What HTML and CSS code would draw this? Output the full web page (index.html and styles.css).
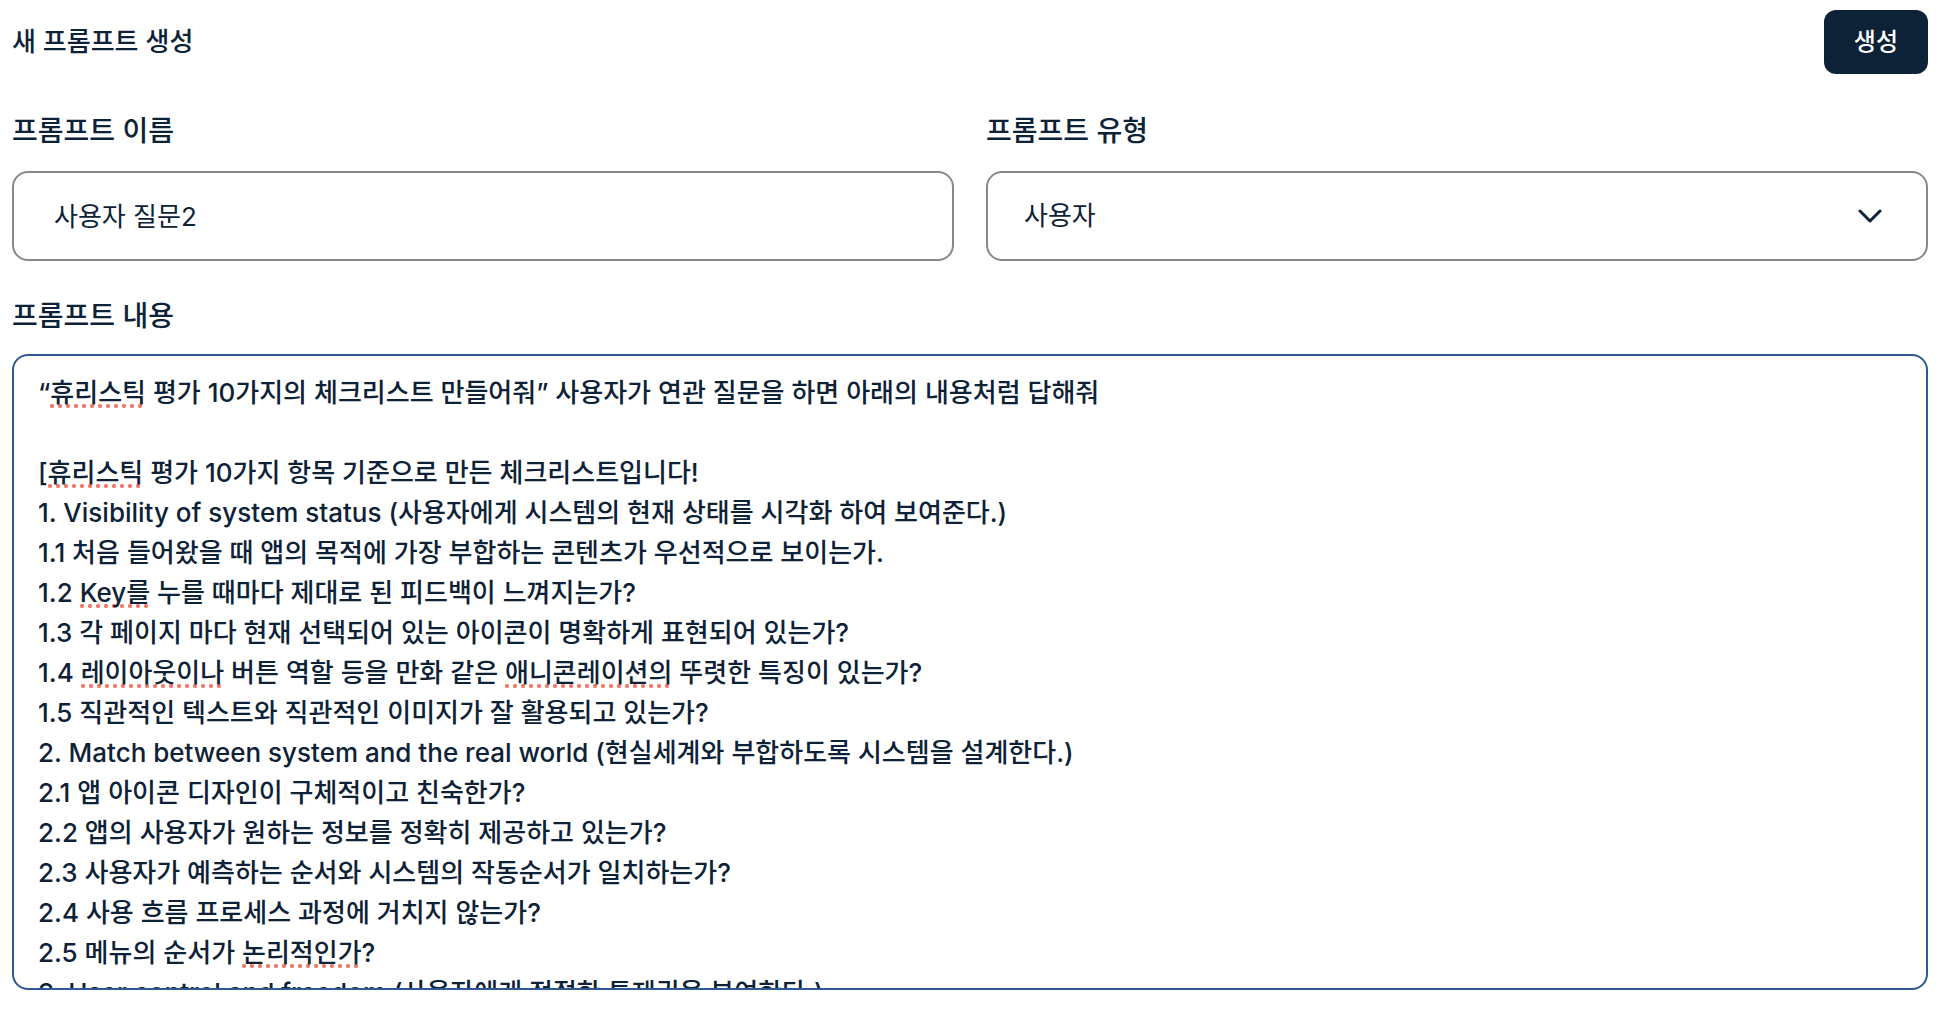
FILE: index.html
```html
<!DOCTYPE html>
<html lang="ko">
<head>
  <meta charset="utf-8">
  <meta name="viewport" content="width=device-width, initial-scale=1">
  <title>새 프롬프트 생성</title>
  <link rel="stylesheet" href="styles.css">
</head>
<body>
  <form class="prompt-form">
    <header class="form-header">
      <h1 class="form-title">새 프롬프트 생성</h1>
      <button class="submit-button" type="submit">생성</button>
    </header>
    <div class="field-row">
      <div class="field">
        <label class="field-label" for="prompt-name">프롬프트 이름</label>
        <input class="control control-text" id="prompt-name" type="text" value="사용자 질문2">
      </div>
      <div class="field">
        <label class="field-label" for="prompt-type">프롬프트 유형</label>
        <div class="select-wrap">
          <select class="control control-select" id="prompt-type">
            <option selected>사용자</option>
          </select>
          <svg class="chevron" viewBox="0 0 24 14" width="24" height="14" aria-hidden="true">
            <path d="M2 2 12 12 22 2" fill="none" stroke="currentColor" stroke-width="3" stroke-linecap="round" stroke-linejoin="round"/>
          </svg>
        </div>
      </div>
    </div>
    <div class="field field-content">
      <label class="field-label" for="prompt-content">프롬프트 내용</label>
      <div class="editor">
        <div class="editor-marks" aria-hidden="true"></div>
        <textarea class="editor-input" id="prompt-content" spellcheck="false">“휴리스틱 평가 10가지의 체크리스트 만들어줘” 사용자가 연관 질문을 하면 아래의 내용처럼 답해줘

[휴리스틱 평가 10가지 항목 기준으로 만든 체크리스트입니다!
1. Visibility of system status (사용자에게 시스템의 현재 상태를 시각화 하여 보여준다.)
1.1 처음 들어왔을 때 앱의 목적에 가장 부합하는 콘텐츠가 우선적으로 보이는가.
1.2 Key를 누를 때마다 제대로 된 피드백이 느껴지는가?
1.3 각 페이지 마다 현재 선택되어 있는 아이콘이 명확하게 표현되어 있는가?
1.4 레이아웃이나 버튼 역할 등을 만화 같은 애니콘레이션의 뚜렷한 특징이 있는가?
1.5 직관적인 텍스트와 직관적인 이미지가 잘 활용되고 있는가?
2. Match between system and the real world (현실세계와 부합하도록 시스템을 설계한다.)
2.1 앱 아이콘 디자인이 구체적이고 친숙한가?
2.2 앱의 사용자가 원하는 정보를 정확히 제공하고 있는가?
2.3 사용자가 예측하는 순서와 시스템의 작동순서가 일치하는가?
2.4 사용 흐름 프로세스 과정에 거치지 않는가?
2.5 메뉴의 순서가 논리적인가?
3. User control and freedom (사용자에게 적절한 통제권을 부여한다.)</textarea>
      </div>
    </div>
  </form>
  <script src="script.js"></script>
</body>
</html>
```
FILE: styles.css
```css
:root {
  --ink: #0e2237;
  --border: #87878e;
  --focus: #2c5a91;
  --spelling: #f07c6c;
  --font: Inter, "Noto Sans CJK KR", sans-serif;
}

*, *::before, *::after {
  box-sizing: border-box;
}

body {
  margin: 0;
  background: #fff;
  color: var(--ink);
  font-family: var(--font);
  font-size: 26px;
  line-height: 40px;
}

.prompt-form {
  display: flex;
  flex-direction: column;
  height: 100vh;
  min-height: 640px;
  padding: 10px 26px 26px 12px;
}

.form-header {
  display: flex;
  align-items: center;
  justify-content: space-between;
  margin-bottom: 37px;
}

.form-title {
  margin: 0;
  font-size: 26px;
  font-weight: 500;
}

.submit-button {
  padding: 12px 30px;
  border: 0;
  border-radius: 12px;
  background: var(--ink);
  color: #fff;
  font: 500 24px/40px var(--font);
}

.field-row {
  display: grid;
  grid-template-columns: 1fr 1fr;
  gap: 32px;
  margin-bottom: 35px;
}

.field {
  display: flex;
  flex-direction: column;
  gap: 20px;
  min-width: 0;
}

.field-label {
  font-size: 28px;
  font-weight: 500;
}

.control {
  width: 100%;
  height: 90px;
  padding: 0 36px;
  border: 2px solid var(--border);
  border-radius: 16px;
  outline: 0;
  background: #fff;
  color: var(--ink);
  font: 400 26px/40px var(--font);
}

.control-text {
  padding: 0 40px 3px;
}

.control-select {
  appearance: none;
}

.select-wrap,
.editor {
  display: grid;
}

.select-wrap > *,
.editor > * {
  grid-area: 1 / 1;
}

.chevron {
  align-self: center;
  justify-self: end;
  margin-right: 46px;
  pointer-events: none;
}

.field-content {
  gap: 18px;
}

.field-content,
.editor {
  flex: 1;
  min-height: 0;
}

.editor {
  grid-template-rows: minmax(0, 1fr);
}

.editor-marks,
.editor-input {
  width: 100%;
  min-height: 0;
  margin: 0;
  padding: 17px 24px;
  border: 2px solid transparent;
  border-radius: 16px;
  font: 500 26px/40px var(--font);
  white-space: pre-wrap;
  overflow-wrap: break-word;
}

.editor-marks {
  position: relative;
  overflow: hidden;
  color: transparent;
}

.editor-input {
  z-index: 1;
  overflow: auto;
  scrollbar-width: none;
  resize: none;
  outline: 0;
  border-color: var(--focus);
  background: transparent;
  color: var(--ink);
}

.misspelled {
  position: absolute;
  height: 4px;
  background: radial-gradient(2px circle at 2px 2px, var(--spelling) 90%, transparent 120%) left top / 8px 4px repeat-x;
}
```
FILE: script.js
```js
// Draws dotted underlines beneath misspelled words behind the text area.
const misspelled = ["휴리스틱", "Key를", "레이아웃이나", "애니콘레이션의", "논리적인가"];
const input = document.querySelector(".editor-input");
const marks = document.querySelector(".editor-marks");
const pattern = new RegExp(misspelled.join("|"), "g");
const underlineOffset = 31;
const lineHeight = 40;

function drawMarks() {
  // Lay the text out once to measure the words, then keep only the underlines.
  const text = document.createTextNode(input.value);
  marks.replaceChildren(text);
  const origin = marks.getBoundingClientRect();
  const range = document.createRange();
  const lines = [];
  for (const match of input.value.matchAll(pattern)) {
    range.setStart(text, match.index);
    range.setEnd(text, match.index + match[0].length);
    const rect = range.getBoundingClientRect();
    const row = Math.floor((rect.top + rect.height / 2 - origin.top - 19) / lineHeight);
    const line = document.createElement("span");
    line.className = "misspelled";
    line.style.left = `${Math.round(rect.left - origin.left - 2)}px`;
    line.style.top = `${17 + row * lineHeight + underlineOffset - input.scrollTop}px`;
    line.style.width = `${Math.round(rect.width)}px`;
    lines.push(line);
  }
  marks.replaceChildren(...lines);
}

input.addEventListener("input", drawMarks);
input.addEventListener("scroll", drawMarks);
window.addEventListener("resize", drawMarks);
drawMarks();
```
